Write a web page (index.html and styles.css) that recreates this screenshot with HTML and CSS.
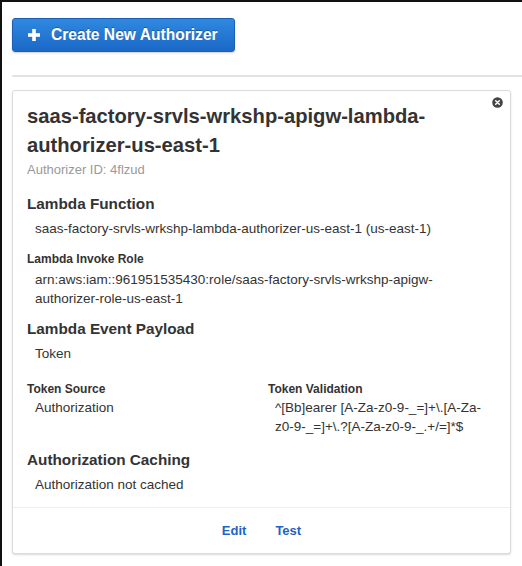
FILE: index.html
```html
<!DOCTYPE html>
<html>
<head>
<meta charset="utf-8">
<link rel="stylesheet" href="styles.css">
</head>
<body>
<div class="frame">
  <div class="toolbar">
    <button class="btn-create">
      <svg class="plus" width="12" height="12" viewBox="0 0 12 12"><rect x="4.2" y="0" width="3.6" height="12" fill="#fff"/><rect x="0" y="4.2" width="12" height="3.6" fill="#fff"/></svg>
      <span>Create New Authorizer</span>
    </button>
  </div>
  <div class="rule"></div>
  <div class="card">
    <span class="close" aria-label="close">
      <svg width="11" height="11" viewBox="0 0 11 11"><circle cx="5.5" cy="5.5" r="5.3" fill="#444"/><path d="M3.7 3.7 L7.3 7.3 M7.3 3.7 L3.7 7.3" stroke="#fff" stroke-width="1.5" stroke-linecap="round"/></svg>
    </span>
    <div class="card-body">
      <h1 class="title">saas-factory-srvls-wrkshp-apigw-lambda-authorizer-us-east-1</h1>
      <div class="subid">Authorizer ID: 4flzud</div>

      <h2 class="sec sec-first">Lambda Function</h2>
      <div class="val">saas-factory-srvls-wrkshp-lambda-authorizer-us-east-1 (us-east-1)</div>

      <h3 class="sub">Lambda Invoke Role</h3>
      <div class="val val-after-sub">arn:aws:iam::961951535430:role/saas-factory-srvls-wrkshp-apigw-authorizer-role-us-east-1</div>

      <h2 class="sec">Lambda Event Payload</h2>
      <div class="val">Token</div>

      <div class="cols">
        <div class="col">
          <h3 class="sub">Token Source</h3>
          <div class="val">Authorization</div>
        </div>
        <div class="col">
          <h3 class="sub">Token Validation</h3>
          <div class="val val-right">^[Bb]earer [A-Za-z0-9-_=]+\.[A-Za-z0-9-_=]+\.?[A-Za-z0-9-_.+/=]*$</div>
        </div>
      </div>

      <h2 class="sec sec-caching">Authorization Caching</h2>
      <div class="val">Authorization not cached</div>
    </div>
    <div class="card-foot">
      <a class="link">Edit</a>
      <a class="link">Test</a>
    </div>
  </div>
</div>
</body>
</html>
```
FILE: styles.css
```css
* { box-sizing: border-box; }
html, body { margin: 0; padding: 0; background: #fff; }
body {
  font-family: "Liberation Sans", Arial, sans-serif;
  color: #333;
  width: 522px;
  height: 566px;
  overflow: hidden;
}
.frame {
  border-left: 2px solid #111;
  border-top: 2px solid #111;
  height: 566px;
  padding: 16px 0 0 10px;
}
.toolbar { display: flex; }
.btn-create {
  display: flex;
  align-items: center;
  height: 34px;
  width: 223px;
  padding: 0 0 0 15px;
  border: 1px solid #1b5fb3;
  border-radius: 3px;
  background: linear-gradient(#3089e0, #1a68c7);
  color: #fff;
  font-family: "Liberation Sans", Arial, sans-serif;
  font-weight: bold;
  font-size: 15.6px;
  text-shadow: 0 -1px 0 rgba(0,0,0,0.3);
  box-shadow: 0 1px 2px rgba(0,0,0,0.2);
}
.plus { margin-right: 11px; flex: none; }
.rule {
  margin-top: 23px;
  height: 2px;
  background: #e3e3e3;
}
.card {
  position: relative;
  margin-top: 13px;
  width: 499px;
  border: 1px solid #dcdcdc;
  border-radius: 3px;
  box-shadow: 0 1px 2px rgba(0,0,0,0.15);
  background: #fff;
}
.close {
  position: absolute;
  right: 7px;
  top: 6px;
  line-height: 0;
}
.card-body { padding: 11px 20px 13px 14px; }
.title {
  margin: 0;
  font-size: 20.2px;
  line-height: 29px;
  font-weight: bold;
  color: #333;
}
.subid {
  color: #999;
  font-size: 13px;
  line-height: 16px;
  margin-top: 2px;
}
.sec {
  margin: 11px 0 0;
  font-size: 15.3px;
  line-height: 20px;
  font-weight: bold;
  color: #333;
}
.sec-first { margin-top: 16px; }
.sec-caching { margin-top: 14px; }
.sub {
  margin: 12px 0 0;
  font-size: 12px;
  line-height: 18px;
  font-weight: bold;
  color: #333;
}
.val {
  font-size: 13.5px;
  line-height: 19px;
  margin-top: 5px;
  padding-left: 8px;
}
.val-after-sub { margin-top: 2px; }
.cols {
  display: grid;
  grid-template-columns: 241px 1fr;
  margin-top: 17px;
}
.cols .sub { margin-top: 0; }
.cols .val { margin-top: 0; }
.cols .val-right { padding-left: 7px; }
.card-foot {
  border-top: 1px solid #eee;
  height: 46px;
  display: flex;
  justify-content: center;
  align-items: center;
  gap: 29px;
}
.link {
  color: #1f63c6;
  font-weight: bold;
  font-size: 13px;
  cursor: pointer;
}
```
